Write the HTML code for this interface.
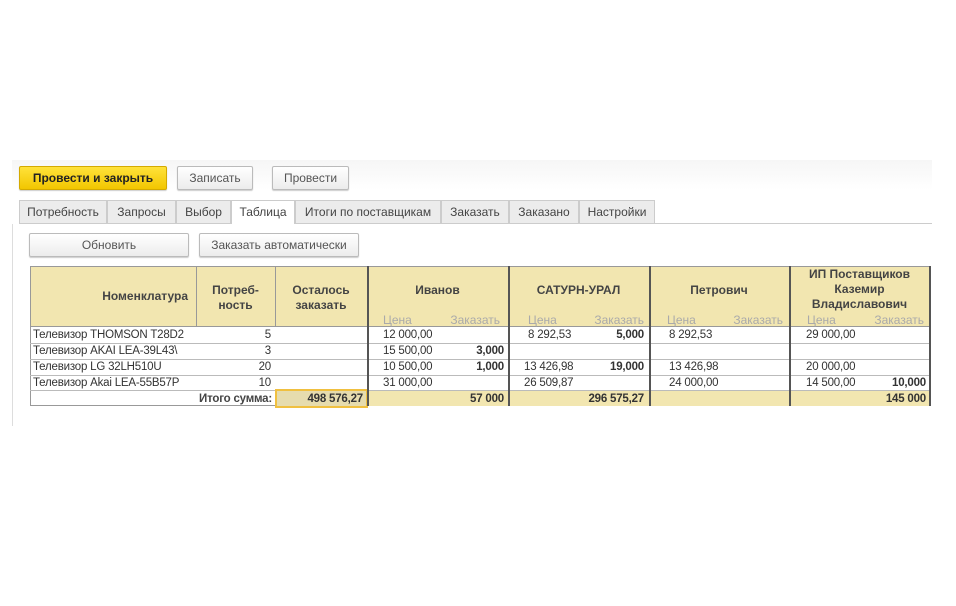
<!DOCTYPE html><html><head><meta charset="utf-8"><style>
body{margin:0;width:956px;height:606px;background:#fff;position:relative;overflow:hidden;font-family:"Liberation Sans",sans-serif;font-size:12px;color:#333}
.a{position:absolute;box-sizing:border-box}
.btn{border:1px solid #bbb;border-radius:2px;background:linear-gradient(#fff,#ececec);text-align:center;line-height:22px;color:#555;box-shadow:0 1px 1px #ccc}
.tab{border:1px solid #ccc;border-bottom:none;background:#ececec;text-align:center;line-height:22px;color:#444;top:200px;height:23px}
.hd{background:#f2e6b0;font-weight:bold;color:#444;text-align:center}
.sub{color:#aaa;font-size:12px;top:313px;line-height:14px}
.c{line-height:16px;height:16px;white-space:nowrap;font-size:11.5px;color:#333;letter-spacing:-0.2px}
.r{text-align:right}
.b{font-weight:bold}
</style></head><body>
<div class="a" style="left:12px;top:160px;width:920px;height:266px;background:linear-gradient(#f6f6f6,#fff 30px)"></div>
<div class="a btn" style="left:19px;top:166px;width:148px;height:24px;background:linear-gradient(#ffe23a,#f2c600);border-color:#d4aa00;color:#222;font-weight:bold">Провести и закрыть</div>
<div class="a btn" style="left:177px;top:166px;width:76px;height:24px">Записать</div>
<div class="a btn" style="left:272px;top:166px;width:77px;height:24px">Провести</div>
<div class="a" style="left:19px;top:223px;width:913px;height:1px;background:#ccc"></div>
<div class="a tab" style="left:19px;width:88px">Потребность</div>
<div class="a tab" style="left:107px;width:69px">Запросы</div>
<div class="a tab" style="left:176px;width:55px">Выбор</div>
<div class="a tab" style="left:231px;width:64px;background:#fff;height:24px">Таблица</div>
<div class="a tab" style="left:295px;width:146px">Итоги по поставщикам</div>
<div class="a tab" style="left:441px;width:68px">Заказать</div>
<div class="a tab" style="left:509px;width:70px">Заказано</div>
<div class="a tab" style="left:579px;width:76px">Настройки</div>
<div class="a btn" style="left:29px;top:233px;width:160px;height:24px">Обновить</div>
<div class="a btn" style="left:199px;top:233px;width:160px;height:24px">Заказать автоматически</div>
<div class="a" style="left:12px;top:224px;width:1px;height:202px;background:#ddd"></div>
<div class="a hd" style="left:30px;top:266px;width:900px;height:61px;border:1px solid #999"></div>
<div class="a hd" style="left:30px;top:289px;width:166px;text-align:right;padding-right:8px;background:none">Номенклатура</div>
<div class="a hd" style="left:196px;top:283px;width:79px;background:none;line-height:15px">Потреб-<br>ность</div>
<div class="a hd" style="left:275px;top:283px;width:92px;background:none;line-height:15px">Осталось<br>заказать</div>
<div class="a hd" style="left:367px;top:283px;width:141px;background:none">Иванов</div>
<div class="a hd" style="left:508px;top:283px;width:141px;background:none">САТУРН-УРАЛ</div>
<div class="a hd" style="left:649px;top:283px;width:140px;background:none">Петрович</div>
<div class="a hd" style="left:789px;top:267px;width:141px;background:none;line-height:15px">ИП Поставщиков<br>Каземир<br>Владиславович</div>
<div class="a sub" style="left:383px">Цена</div><div class="a sub r" style="left:440px;width:60px">Заказать</div>
<div class="a sub" style="left:528px">Цена</div><div class="a sub r" style="left:580px;width:64px">Заказать</div>
<div class="a sub" style="left:667px">Цена</div><div class="a sub r" style="left:720px;width:63px">Заказать</div>
<div class="a sub" style="left:807px">Цена</div><div class="a sub r" style="left:860px;width:64px">Заказать</div>
<div class="a" style="left:30px;top:327px;width:900px;height:79px;border:1px solid #999;border-top:none;background:#fff"></div>
<div class="a" style="left:30px;top:343px;width:900px;height:1px;background:#bbb"></div>
<div class="a" style="left:30px;top:359px;width:900px;height:1px;background:#bbb"></div>
<div class="a" style="left:30px;top:375px;width:900px;height:1px;background:#bbb"></div>
<div class="a" style="left:30px;top:390px;width:900px;height:1px;background:#bbb"></div>
<div class="a" style="left:367px;top:391px;width:563px;height:15px;background:#f2e6b0"></div>
<div class="a" style="left:275px;top:389px;width:93px;height:19px;background:#e6dcae;border:2px solid #f0c040"></div>
<div class="a" style="left:196px;top:266px;width:1px;height:61px;background:#999"></div>
<div class="a" style="left:275px;top:266px;width:1px;height:61px;background:#999"></div>
<div class="a" style="left:367px;top:266px;width:2px;height:140px;background:#555"></div>
<div class="a" style="left:508px;top:266px;width:2px;height:140px;background:#555"></div>
<div class="a" style="left:649px;top:266px;width:2px;height:140px;background:#555"></div>
<div class="a" style="left:789px;top:266px;width:2px;height:140px;background:#555"></div>
<div class="a" style="left:929px;top:266px;width:2px;height:140px;background:#555"></div>
<div class="a c" style="left:33px;top:327px;width:160px;overflow:hidden">Телевизор THOMSON T28D2</div>
<div class="a c" style="left:33px;top:343px;width:160px;overflow:hidden">Телевизор AKAI LEA-39L43\</div>
<div class="a c" style="left:33px;top:359px;width:160px;overflow:hidden">Телевизор LG 32LH510U</div>
<div class="a c" style="left:33px;top:375px;width:160px;overflow:hidden">Телевизор Akai LEA-55B57P</div>
<div class="a c r" style="left:196px;top:327px;width:75px">5</div>
<div class="a c r" style="left:196px;top:343px;width:75px">3</div>
<div class="a c r" style="left:196px;top:359px;width:75px">20</div>
<div class="a c r" style="left:196px;top:375px;width:75px">10</div>
<div class="a c" style="left:383px;top:327px">12 000,00</div>
<div class="a c" style="left:383px;top:343px">15 500,00</div>
<div class="a c b r" style="left:440px;top:343px;width:64px">3,000</div>
<div class="a c" style="left:383px;top:359px">10 500,00</div>
<div class="a c b r" style="left:440px;top:359px;width:64px">1,000</div>
<div class="a c" style="left:383px;top:375px">31 000,00</div>
<div class="a c" style="left:528px;top:327px">8 292,53</div>
<div class="a c b r" style="left:580px;top:327px;width:64px">5,000</div>
<div class="a c" style="left:524px;top:359px">13 426,98</div>
<div class="a c b r" style="left:580px;top:359px;width:64px">19,000</div>
<div class="a c" style="left:524px;top:375px">26 509,87</div>
<div class="a c" style="left:669px;top:327px">8 292,53</div>
<div class="a c" style="left:669px;top:359px">13 426,98</div>
<div class="a c" style="left:669px;top:375px">24 000,00</div>
<div class="a c" style="left:806px;top:327px">29 000,00</div>
<div class="a c" style="left:806px;top:359px">20 000,00</div>
<div class="a c" style="left:806px;top:375px">14 500,00</div>
<div class="a c b r" style="left:860px;top:375px;width:66px">10,000</div>
<div class="a c b r" style="left:150px;top:391px;width:122px;color:#444">Итого сумма:</div>
<div class="a c b r" style="left:277px;top:391px;width:86px">498 576,27</div>
<div class="a c b r" style="left:440px;top:391px;width:64px">57 000</div>
<div class="a c b r" style="left:560px;top:391px;width:84px">296 575,27</div>
<div class="a c b r" style="left:860px;top:391px;width:66px">145 000</div>
</body></html>
